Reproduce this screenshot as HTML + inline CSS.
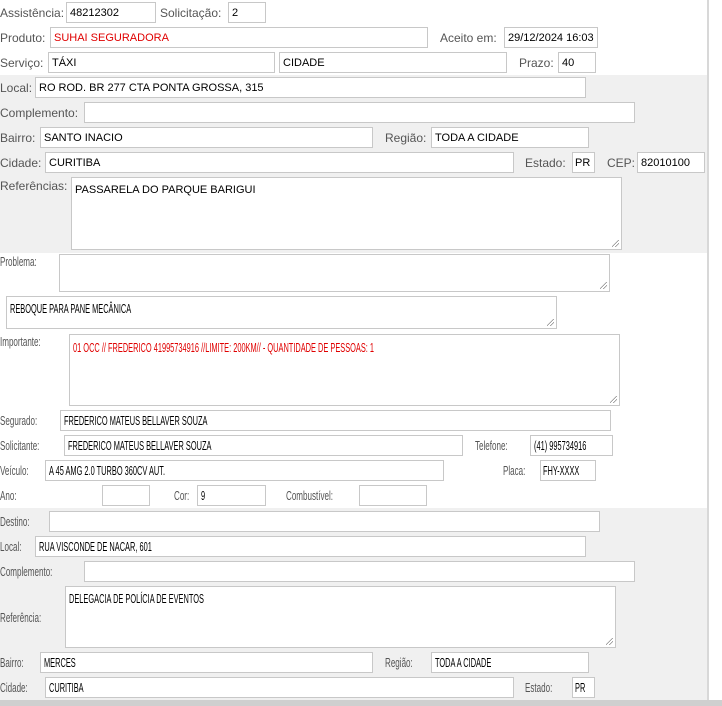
<!DOCTYPE html>
<html><head><meta charset="utf-8"><style>
body{margin:0;width:722px;height:706px;background:#fff;position:relative;overflow:hidden;font-family:"Liberation Sans",Arial,sans-serif;font-size:11px;}
.g{position:absolute;left:0;width:707px;background:#f0f0f0;}
.vl{position:absolute;left:707px;top:0;width:2px;height:700px;background:#d8d8d8;}
.l{position:absolute;color:#555;white-space:nowrap;line-height:14px;font-size:12px;}
.i{position:absolute;box-sizing:border-box;border:1px solid #c8c8c8;background:#fff;height:21px;color:#000;padding:3px 3px;white-space:nowrap;overflow:hidden;line-height:14px;}
.r{color:#e00000;}
.n{display:inline-block;font-size:13px;transform:scaleX(0.57);transform-origin:0 0;}
.l .n{transform:scaleX(0.62);}
.t{height:auto;}
.t:after{content:"";position:absolute;right:2px;bottom:2px;width:7px;height:7px;background:linear-gradient(135deg,transparent 45%,#888 45%,#888 52%,transparent 52%,transparent 70%,#888 70%,#888 77%,transparent 77%);}
</style></head><body>
<div class="g" style="top:75px;height:178px"></div>
<div class="g" style="top:508px;height:192px"></div>
<div style="position:absolute;left:0;top:700px;width:722px;height:6px;background:#cfcfcf"></div>
<div class="vl"></div>

<div class="l" style="left:0;top:6px">Assistência:</div>
<div class="i" style="left:66px;top:2px;width:90px">48212302</div>
<div class="l" style="left:160px;top:6px">Solicitação:</div>
<div class="i" style="left:228px;top:2px;width:38px">2</div>

<div class="l" style="left:0;top:31px">Produto:</div>
<div class="i r" style="left:50px;top:27px;width:378px">SUHAI SEGURADORA</div>
<div class="l" style="left:440px;top:31px">Aceito em:</div>
<div class="i" style="left:504px;top:27px;width:94px;padding-right:0">29/12/2024 16:03</div>

<div class="l" style="left:0;top:56px">Serviço:</div>
<div class="i" style="left:48px;top:52px;width:227px">TÁXI</div>
<div class="i" style="left:279px;top:52px;width:228px">CIDADE</div>
<div class="l" style="left:519px;top:56px">Prazo:</div>
<div class="i" style="left:558px;top:52px;width:38px">40</div>

<div class="l" style="left:0;top:81px">Local:</div>
<div class="i" style="left:35px;top:77px;width:551px">RO ROD. BR 277 CTA PONTA GROSSA, 315</div>
<div class="l" style="left:0;top:106px">Complemento:</div>
<div class="i" style="left:84px;top:102px;width:551px"></div>
<div class="l" style="left:0;top:131px">Bairro:</div>
<div class="i" style="left:40px;top:127px;width:333px">SANTO INACIO</div>
<div class="l" style="left:385px;top:131px">Região:</div>
<div class="i" style="left:431px;top:127px;width:158px">TODA A CIDADE</div>
<div class="l" style="left:0;top:156px">Cidade:</div>
<div class="i" style="left:45px;top:152px;width:469px">CURITIBA</div>
<div class="l" style="left:525px;top:156px">Estado:</div>
<div class="i" style="left:572px;top:152px;width:23px;padding:3px 2px">PR</div>
<div class="l" style="left:607px;top:156px">CEP:</div>
<div class="i" style="left:637px;top:152px;width:68px">82010100</div>
<div class="l" style="left:0;top:179px">Referências:</div>
<div class="i t" style="left:71px;top:177px;width:551px;height:73px;padding-top:5px">PASSARELA DO PARQUE BARIGUI</div>

<div class="l" style="left:0;top:255px"><span class="n">Problema:</span></div>
<div class="i t" style="left:59px;top:254px;width:551px;height:38px"></div>
<div class="i t" style="left:6px;top:296px;width:551px;height:33px;padding-top:5px"><span class="n">REBOQUE PARA PANE MECÂNICA</span></div>
<div class="l" style="left:0;top:335px"><span class="n">Importante:</span></div>
<div class="i t r" style="left:69px;top:334px;width:551px;height:72px;padding-top:6px"><span class="n">01 OCC // FREDERICO 41995734916 //LIMITE: 200KM// - QUANTIDADE DE PESSOAS: 1</span></div>

<div class="l" style="left:0;top:414px"><span class="n">Segurado:</span></div>
<div class="i" style="left:60px;top:410px;width:551px"><span class="n">FREDERICO MATEUS BELLAVER SOUZA</span></div>
<div class="l" style="left:0;top:439px"><span class="n">Solicitante:</span></div>
<div class="i" style="left:64px;top:435px;width:399px"><span class="n">FREDERICO MATEUS BELLAVER SOUZA</span></div>
<div class="l" style="left:475px;top:439px"><span class="n">Telefone:</span></div>
<div class="i" style="left:530px;top:435px;width:83px;padding-right:0"><span class="n">(41) 995734916</span></div>
<div class="l" style="left:0;top:464px"><span class="n">Veículo:</span></div>
<div class="i" style="left:45px;top:460px;width:399px"><span class="n">A 45 AMG 2.0 TURBO 360CV AUT.</span></div>
<div class="l" style="left:503px;top:464px"><span class="n">Placa:</span></div>
<div class="i" style="left:540px;top:460px;width:56px;padding:3px 2px"><span class="n">FHY-XXXX</span></div>
<div class="l" style="left:0;top:489px"><span class="n">Ano:</span></div>
<div class="i" style="left:102px;top:485px;width:48px"></div>
<div class="l" style="left:174px;top:489px"><span class="n">Cor:</span></div>
<div class="i" style="left:197px;top:485px;width:69px;padding-left:3px"><span class="n">9</span></div>
<div class="l" style="left:286px;top:489px"><span class="n">Combustível:</span></div>
<div class="i" style="left:359px;top:485px;width:68px"></div>

<div class="l" style="left:0;top:515px"><span class="n">Destino:</span></div>
<div class="i" style="left:49px;top:511px;width:551px"></div>
<div class="l" style="left:0;top:540px"><span class="n">Local:</span></div>
<div class="i" style="left:35px;top:536px;width:551px"><span class="n">RUA VISCONDE DE NACAR, 601</span></div>
<div class="l" style="left:0;top:565px"><span class="n">Complemento:</span></div>
<div class="i" style="left:84px;top:561px;width:551px"></div>
<div class="l" style="left:0;top:611px"><span class="n">Referência:</span></div>
<div class="i t" style="left:65px;top:586px;width:551px;height:62px;padding-top:5px"><span class="n">DELEGACIA DE POLÍCIA DE EVENTOS</span></div>
<div class="l" style="left:0;top:656px"><span class="n">Bairro:</span></div>
<div class="i" style="left:40px;top:652px;width:333px"><span class="n">MERCES</span></div>
<div class="l" style="left:385px;top:656px"><span class="n">Região:</span></div>
<div class="i" style="left:431px;top:652px;width:158px"><span class="n">TODA A CIDADE</span></div>
<div class="l" style="left:0;top:681px"><span class="n">Cidade:</span></div>
<div class="i" style="left:45px;top:677px;width:469px"><span class="n">CURITIBA</span></div>
<div class="l" style="left:525px;top:681px"><span class="n">Estado:</span></div>
<div class="i" style="left:572px;top:677px;width:23px;padding:3px 2px"><span class="n">PR</span></div>
</body></html>
